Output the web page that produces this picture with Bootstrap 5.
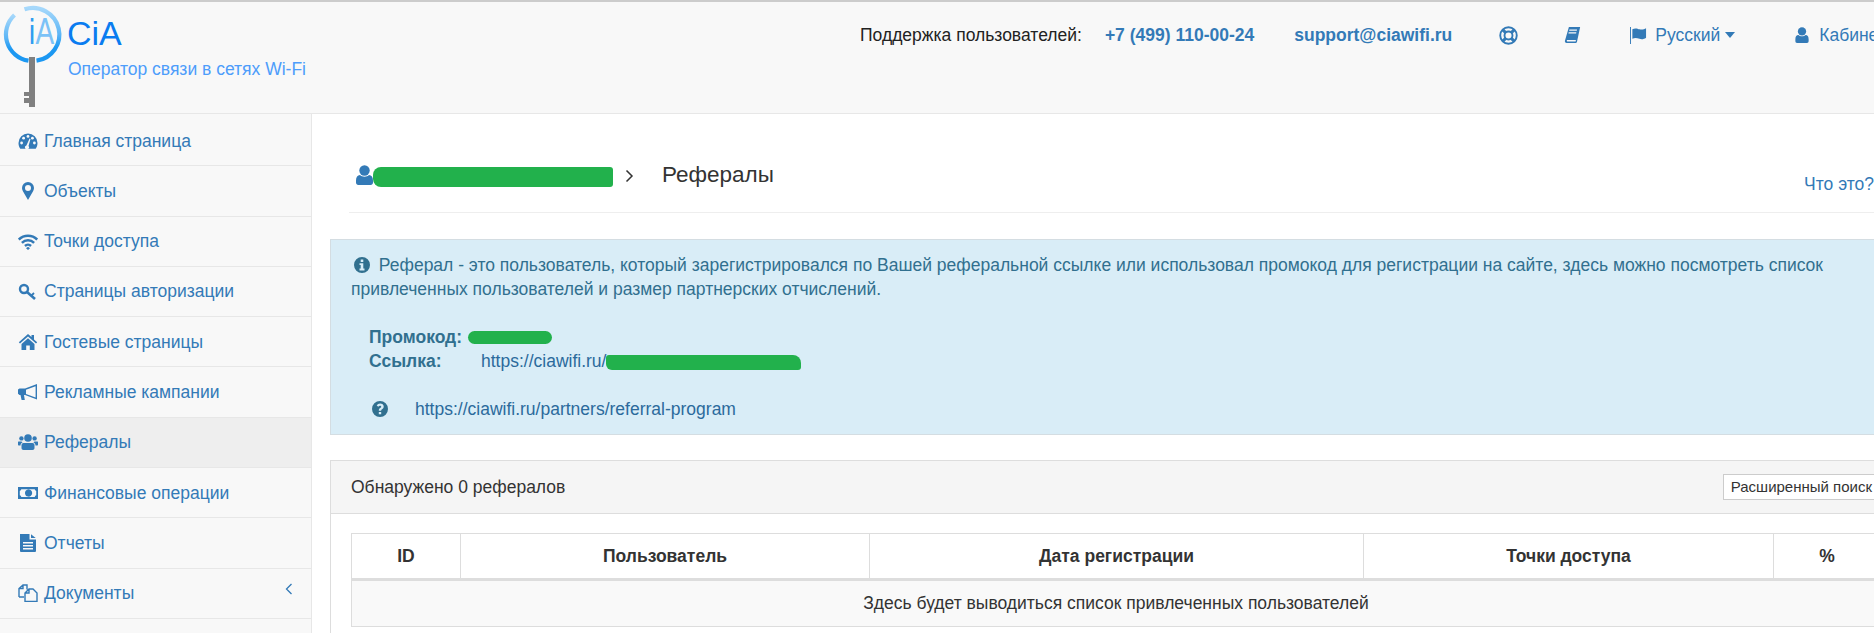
<!DOCTYPE html>
<html lang="ru">
<head>
<meta charset="utf-8">
<title>CiA — Рефералы</title>
<link href="https://cdn.jsdelivr.net/npm/bootstrap@5.3.0/dist/css/bootstrap.min.css" rel="stylesheet">
<style>
html,body{height:633px;overflow:hidden;background:#fff}
body{font-family:"Liberation Sans",Arial,sans-serif;font-size:17.5px;color:#333}
a{color:#337ab7;text-decoration:none}
.ui-frame{width:1915px;height:633px;display:flex;flex-direction:column}
.ui-top{height:114px;flex:none;background:#f8f8f8;border-top:2px solid #ccc;border-bottom:1px solid #e7e7e7;padding:0;align-items:flex-start;flex-wrap:nowrap;justify-content:flex-start}
.ui-logo{width:64px;height:110px;margin-left:3px;flex:none}
.ui-brand{margin-left:1px;width:792px;flex:none}
.ui-brand-name{font-size:34px;line-height:38px;color:#0a7cf0;padding-top:12px;margin-left:-1px}
.ui-brand-sub{font-size:17.5px;line-height:20px;color:#4d9dfb;margin-top:7px}
.ui-topnav{height:66px;font-size:17.5px;color:#222;flex:none;flex-wrap:nowrap}
.ui-topnav a{color:#337ab7}
.ui-phone{margin-left:23px;font-weight:700}
.ui-mail{margin-left:40px;font-weight:700}
.ui-t-life{margin-left:47px}
.ui-t-book{margin-left:46px}
.ui-t-flag{margin-left:48px}
.ui-t-flag span{margin:0 1px 0 3px}
.ui-t-user{margin-left:60px}
.ui-t-user span{margin-left:2px}
.ui-ic{fill:currentColor;flex:none;display:block}
.ui-body{flex:1;display:flex;min-height:0}
.ui-side{width:312px;flex:none;background:#f8f8f8;border-right:1px solid #e7e7e7;margin:0;padding:2px 0 0;list-style:none;border-radius:0}
.ui-side .list-group-item{height:50.3px;background:transparent;border:0;border-bottom:1px solid #e7e7e7;border-radius:0;padding:0 0 0 18px;display:flex;align-items:center;color:#337ab7;font-size:17.5px}
.ui-side .list-group-item.ui-on{background:#eee}
.ui-side-ic{width:20px;height:18px;margin-right:6px;color:#337ab7}
.ui-side-arrow{margin-left:auto;margin-right:18px;margin-top:-8px;width:8px;height:12px;stroke:#337ab7;fill:none}
.ui-main{flex:1;padding:0 18px 0 18px;min-width:0}
.ui-head{margin:48px 0 0 19px;height:51px;border-bottom:1px solid #eee;align-items:flex-start}
.ui-person{width:17px;height:20px;margin:3px 0 0 7px;color:#337ab7}
.ui-blur{display:inline-block;background:#22b14c;flex:none}
.ui-blur-name{width:240px;height:20px;margin-top:5px;border-radius:8px 3px 3px 8px}
.ui-crumb{width:9px;height:14px;margin:7px 0 0 12px;stroke:#333;fill:none}
.ui-title{font-size:22.5px;line-height:24px;margin:1px 0 0 28px;font-weight:400;color:#333}
.ui-what{margin:12px 23px 0 auto;font-size:17.5px;line-height:20px}
.ui-note{margin:26px 0 25px 0;padding:13px 20px;background:#d9edf7;border:1px solid #d4dde2;border-radius:0;color:#31708f;line-height:24px;font-size:17.5px}
.ui-note a{color:#2b6a9c}
.ui-note-ic{display:inline-block;width:16px;height:16px;margin:0 4px 0 3px;vertical-align:-2px}
.ui-promo{margin:24px 0 0 18px}
.ui-promo b{display:inline-block;color:#31708f}
.ui-promo-k{width:112px}
.ui-blur-code{width:84px;height:13px;border-radius:7px;vertical-align:-1px;margin-left:-13px}
.ui-blur-link{width:195px;height:15px;border-radius:3px 8px 3px 6px;vertical-align:-3px}
.ui-help{margin:24px 0 0 21px}
.ui-help-ic{display:inline-block;width:16px;height:16px;margin-right:27px;vertical-align:-2px}
.ui-panel{border:1px solid #ddd;border-radius:0}
.ui-panel .card-header{height:53px;background:#f5f5f5;border-bottom:1px solid #ddd;border-radius:0;padding:0 20px;font-size:17.5px}
.ui-search{font-size:15px;line-height:16px;padding:4px 7px;height:26px;background:#fff;border:1px solid #ccc;border-radius:0;color:#333;white-space:nowrap;margin-right:-4px}
.ui-panel .card-body{padding:19px 20px 20px}
.ui-grid{table-layout:fixed;width:1529px;margin:0;border-color:#ddd;font-size:17.5px;color:#333}
.ui-grid th,.ui-grid td{text-align:center;vertical-align:middle;padding:0;border:1px solid #ddd}
.ui-grid thead th{height:46px;border-bottom:3px solid #ddd;font-size:17.5px;color:#333}
.ui-grid tbody td{height:47px;background:#f9f9f9;font-size:17.5px}
.ui-c1{width:109px}.ui-c2{width:409px}.ui-c3{width:494px}.ui-c4{width:410px}.ui-c5{width:107px}
</style>
</head>
<body>
<svg class="d-none" xmlns="http://www.w3.org/2000/svg">
  <symbol id="i-gauge" viewBox="0 0 20 18"><path d="M10 1.500A9.500 9.500 0 0 0 .5 11c0 2 .6 3.900 1.600 5.400.2.300.5.400.8.400h14.200c.3 0 .6-.1.8-.4 1-1.500 1.600-3.400 1.600-5.400A9.500 9.500 0 0 0 10 1.500z"/><g fill="#f8f8f8"><circle cx="3.600" cy="11" r="1.400"/><circle cx="5.600" cy="6.200" r="1.400"/><circle cx="10" cy="4.400" r="1.400"/><circle cx="14.400" cy="6.200" r="1.400"/><circle cx="16.400" cy="11" r="1.400"/><path d="M8.400 13.400 11.600 6.600l.9.4-2 7a2 2 0 1 1-2.100-.6z"/></g></symbol>
  <symbol id="i-pin" viewBox="0 0 20 18"><path fill-rule="evenodd" d="M10 0a6 6 0 0 0-6 6c0 1.200.4 2 .8 2.900L10 18l5.200-9.100c.4-.9.8-1.700.8-2.900a6 6 0 0 0-6-6zm0 9a3 3 0 1 1 0-6 3 3 0 0 1 0 6z"/></symbol>
  <symbol id="i-wifi" viewBox="0 0 20 18"><path d="M.8 7.500a13 13 0 0 1 18.400 0M3.900 10.800a8.700 8.700 0 0 1 12.200 0M7 14a4.300 4.300 0 0 1 6 0" fill="none" stroke="currentColor" stroke-width="2.500"/><path d="M10 14.700l-2 1.600 2 1.700 2-1.700z"/></symbol>
  <symbol id="i-key" viewBox="0 0 20 18"><circle cx="6" cy="6" r="4" fill="none" stroke="currentColor" stroke-width="2.400"/><path d="M9 9l8 7" fill="none" stroke="currentColor" stroke-width="2.600"/><path d="M13.500 12.500l2.500-2.500" fill="none" stroke="currentColor" stroke-width="1.800"/></symbol>
  <symbol id="i-home" viewBox="0 0 20 18"><path d="M10 1 .8 9.300l1.200 1.300L10 3.500l8 7.100 1.200-1.300-3.200-2.900V1.900h-2.500v2.200z"/><path d="M10 5.200 3.500 11v6h4.700v-4.500h3.600V17h4.700v-6z"/></symbol>
  <symbol id="i-horn" viewBox="0 0 20 18"><path fill-rule="evenodd" d="M19 1 7 5.500H1.500L0 6.600v4.200l1.500 1.100h1L3.600 17h3.200L6 12h1l12 4.500zm-1.400 2.200v11.300L8 11V6.700z"/></symbol>
  <symbol id="i-users" viewBox="0 0 20 18"><circle cx="10" cy="5" r="3.800"/><circle cx="3.400" cy="5.400" r="2.200"/><circle cx="16.600" cy="5.400" r="2.200"/><path d="M5.500 10h9c1.300 0 2 1 2 2.500V15c0 1.200-.8 2-2 2h-9c-1.200 0-2-.8-2-2v-2.500C3.500 11 4.200 10 5.500 10z"/><path d="M.5 8.500h3l1 .9c-1.400.5-2 1.600-2 3H1c-.6 0-1-.4-1-1V9c0-.3.200-.5.500-.5zM16.500 8.500h3c.3 0 .5.200.5.500v2.400c0 .6-.4 1-1 1h-1.500c0-1.400-.6-2.500-2-3z"/></symbol>
  <symbol id="i-money" viewBox="0 0 20 18"><path fill-rule="evenodd" d="M0 3h20v12H0zm3.300 2.200A2.400 2.400 0 0 1 1.800 6.900v4.400a2.400 2.400 0 0 1 1.500 1.600h13.400a2.400 2.400 0 0 1 1.500-1.600V6.900a2.400 2.400 0 0 1-1.500-1.700zM10 5.500a3.600 3.600 0 1 1 0 7.100 3.600 3.600 0 0 1 0-7.100z"/><path d="M9.200 7h1.500v3.800h1v.9H8.300v-.9h1V8.200H8.500z"/></symbol>
  <symbol id="i-doc" viewBox="0 0 20 18"><path fill-rule="evenodd" d="M2 0h9.500v5.500H18V17a1 1 0 0 1-1 1H3a1 1 0 0 1-1-1zM5 8v1.500h10V8zm0 3v1.500h10V11zm0 3v1.500h10V14z"/><path d="M13 .3 17.700 4H13z"/></symbol>
  <symbol id="i-docs" viewBox="0 0 20 18"><path d="M1 13V4.500L5 1h4v4.500M5 1v3.500H1M1 13h5M11 5h4l4 4v8.500H7V9zM11 5v4H7" fill="none" stroke="currentColor" stroke-width="1.400"/></symbol>
  <symbol id="i-user" viewBox="0 0 17 20"><circle cx="8.500" cy="5.500" r="5.200"/><path d="M4 10c1 1 2.800 1.700 4.500 1.700S12 11 13 10c2.500.2 4 2.100 4 5.500v2c0 1.400-1 2.500-2.300 2.500H2.300C1 20 0 18.900 0 17.500v-2C0 12.100 1.500 10.200 4 10z"/></symbol>
  <symbol id="i-life" viewBox="0 0 20 20"><g fill="none" stroke="currentColor"><circle cx="10" cy="10" r="8.700" stroke-width="2"/><circle cx="10" cy="10" r="4.200" stroke-width="2"/><path d="M3.800 3.800 7 7M16.200 3.800 13 7M3.800 16.200 7 13M16.200 16.200 13 13" stroke-width="3.200"/></g></symbol>
  <symbol id="i-book" viewBox="0 0 18 20"><path fill-rule="evenodd" d="M5 1h12.500L14 17.500c-.2 1-.9 1.500-2 1.500H2.500C1 19 .3 17.800.6 16.500zm.6 3-.3 1.300h8.500L14 4zm-.8 3-.3 1.300h8.500l.3-1.300zM2.800 15.500c-.3 1 0 1.700.9 1.700h8.800l.3-1.700z"/></symbol>
  <symbol id="i-flag" viewBox="0 0 20 18"><path d="M1 0h1v18H1z"/><path d="M3.500 2.500c3-2 5.500-.6 7.500 0 2.500.6 5 .2 7-1.200v10c-2 1.500-4.500 2-7 1.200-2.400-.7-4.500-1.700-7.500 0z"/></symbol>
  <symbol id="i-info" viewBox="0 0 16 16"><path fill-rule="evenodd" d="M8 0a8 8 0 1 0 0 16A8 8 0 0 0 8 0zM6.700 2.600h2.600v2.300H6.700zM5.500 6.300h3.800v5.300h1.200v1.800h-5v-1.800h1.200V8.100H5.500z"/></symbol>
  <symbol id="i-help" viewBox="0 0 16 16"><path fill-rule="evenodd" d="M8 0a8 8 0 1 0 0 16A8 8 0 0 0 8 0zM6.800 11h2.400v2.300H6.800zM8.100 2.600c2 0 3.600 1.200 3.600 3 0 1.400-.8 2.100-1.600 2.600-.6.400-.9.700-.9 1.500H6.800c0-1.500.5-2.200 1.300-2.700.6-.4 1.100-.7 1.100-1.300S8.700 4.800 8 4.800c-.7 0-1.200.4-1.700 1L4.700 4.600c.8-1.300 1.900-2 3.400-2z"/></symbol>
</svg>

<div class="ui-frame">
  <nav class="navbar ui-top">
    <svg class="ui-logo" viewBox="0 0 64 110" aria-label="Логотип CiA">
      <defs><linearGradient id="ui-ring" x1="0" y1="0" x2="0" y2="1"><stop offset="0" stop-color="#a6d8fb"/><stop offset=".5" stop-color="#5db6f6"/><stop offset=".75" stop-color="#1c98f2"/><stop offset="1" stop-color="#1c98f2"/></linearGradient></defs>
      <g fill="none" stroke="url(#ui-ring)" stroke-width="4.200">
        <path d="M11.500 13A26.500 26.500 0 0 0 25.500 58.700"/>
        <path d="M33.500 58.700A26.500 26.500 0 1 0 21.500 7.300"/>
      </g>
      <text transform="translate(26.500 42) scale(1 2)" font-family="Liberation Sans, sans-serif" font-weight="700" font-size="18" fill="#2f9cf0">i</text>
      <text transform="translate(32.500 42) scale(1 1.35)" font-family="Liberation Sans, sans-serif" font-size="28" fill="#7cc2f7">A</text>
      <rect x="26" y="55" width="6" height="50" fill="#808080"/>
      <rect x="21" y="90" width="5" height="4" fill="#808080"/>
      <rect x="21" y="96" width="5" height="5" fill="#808080"/>
    </svg>
    <div class="ui-brand">
      <div class="ui-brand-name">CiA</div>
      <div class="ui-brand-sub">Оператор связи в сетях Wi-Fi</div>
    </div>
    <div class="ui-topnav d-flex align-items-center">
      <span>Поддержка пользователей:</span>
      <a class="ui-phone" href="#">+7 (499) 110-00-24</a>
      <a class="ui-mail" href="#">support@ciawifi.ru</a>
      <a class="ui-t-life" href="#"><svg class="ui-ic" width="19" height="19"><use href="#i-life"/></svg></a>
      <a class="ui-t-book" href="#"><svg class="ui-ic" width="17" height="18"><use href="#i-book"/></svg></a>
      <a class="ui-t-flag d-flex align-items-center gap-1" href="#"><svg class="ui-ic" width="19" height="17"><use href="#i-flag"/></svg><span>Русский</span><svg class="ui-ic" width="10" height="6" viewBox="0 0 10 6"><path d="M0 0h10L5 6z"/></svg></a>
      <a class="ui-t-user d-flex align-items-center gap-2" href="#"><svg class="ui-ic" width="14" height="16" viewBox="0 0 17 20"><use href="#i-user"/></svg><span>Кабинет</span></a>
    </div>
  </nav>

  <div class="ui-body">
    <ul class="list-group ui-side">
      <li class="list-group-item"><svg class="ui-ic ui-side-ic"><use href="#i-gauge"/></svg>Главная страница</li>
      <li class="list-group-item"><svg class="ui-ic ui-side-ic"><use href="#i-pin"/></svg>Объекты</li>
      <li class="list-group-item"><svg class="ui-ic ui-side-ic"><use href="#i-wifi"/></svg>Точки доступа</li>
      <li class="list-group-item"><svg class="ui-ic ui-side-ic"><use href="#i-key"/></svg>Страницы авторизации</li>
      <li class="list-group-item"><svg class="ui-ic ui-side-ic"><use href="#i-home"/></svg>Гостевые страницы</li>
      <li class="list-group-item"><svg class="ui-ic ui-side-ic"><use href="#i-horn"/></svg>Рекламные кампании</li>
      <li class="list-group-item ui-on"><svg class="ui-ic ui-side-ic"><use href="#i-users"/></svg>Рефералы</li>
      <li class="list-group-item"><svg class="ui-ic ui-side-ic"><use href="#i-money"/></svg>Финансовые операции</li>
      <li class="list-group-item"><svg class="ui-ic ui-side-ic"><use href="#i-doc"/></svg>Отчеты</li>
      <li class="list-group-item"><svg class="ui-ic ui-side-ic"><use href="#i-docs"/></svg>Документы<svg class="ui-side-arrow" viewBox="0 0 8 12"><path d="M6.500 1 1.500 6l5 5" stroke-width="1.300"/></svg></li>
    </ul>

    <main class="ui-main">
      <div class="ui-head d-flex">
        <svg class="ui-ic ui-person"><use href="#i-user"/></svg>
        <span class="ui-blur ui-blur-name"></span>
        <svg class="ui-crumb" viewBox="0 0 9 14"><path d="M1.500 1.500 7 7l-5.500 5.500" stroke-width="1.500"/></svg>
        <h1 class="ui-title">Рефералы</h1>
        <a class="ui-what" href="#">Что это?</a>
      </div>

      <div class="alert ui-note" role="alert">
        <div><svg class="ui-ic ui-note-ic"><use href="#i-info"/></svg> Реферал - это пользователь, который зарегистрировался по Вашей реферальной ссылке или использовал промокод для регистрации на сайте, здесь можно посмотреть список привлеченных пользователей и размер партнерских отчислений.</div>
        <div class="ui-promo">
          <div><b class="ui-promo-k">Промокод:</b><span class="ui-blur ui-blur-code"></span></div>
          <div><b class="ui-promo-k">Ссылка:</b><a href="#">https://ciawifi.ru/</a><span class="ui-blur ui-blur-link"></span></div>
        </div>
        <div class="ui-help"><svg class="ui-ic ui-help-ic"><use href="#i-help"/></svg><a href="#">https://ciawifi.ru/partners/referral-program</a></div>
      </div>

      <div class="card ui-panel">
        <div class="card-header d-flex align-items-center justify-content-between">
          <span>Обнаружено 0 рефералов</span>
          <button class="btn ui-search" type="button">Расширенный поиск</button>
        </div>
        <div class="card-body">
          <table class="table table-bordered ui-grid">
            <colgroup><col class="ui-c1"><col class="ui-c2"><col class="ui-c3"><col class="ui-c4"><col class="ui-c5"></colgroup>
            <thead><tr><th>ID</th><th>Пользователь</th><th>Дата регистрации</th><th>Точки доступа</th><th>%</th></tr></thead>
            <tbody><tr><td colspan="5">Здесь будет выводиться список привлеченных пользователей</td></tr></tbody>
          </table>
        </div>
      </div>
    </main>
  </div>
</div>
<script src="https://cdn.jsdelivr.net/npm/bootstrap@5.3.0/dist/js/bootstrap.bundle.min.js"></script>
</body>
</html>
